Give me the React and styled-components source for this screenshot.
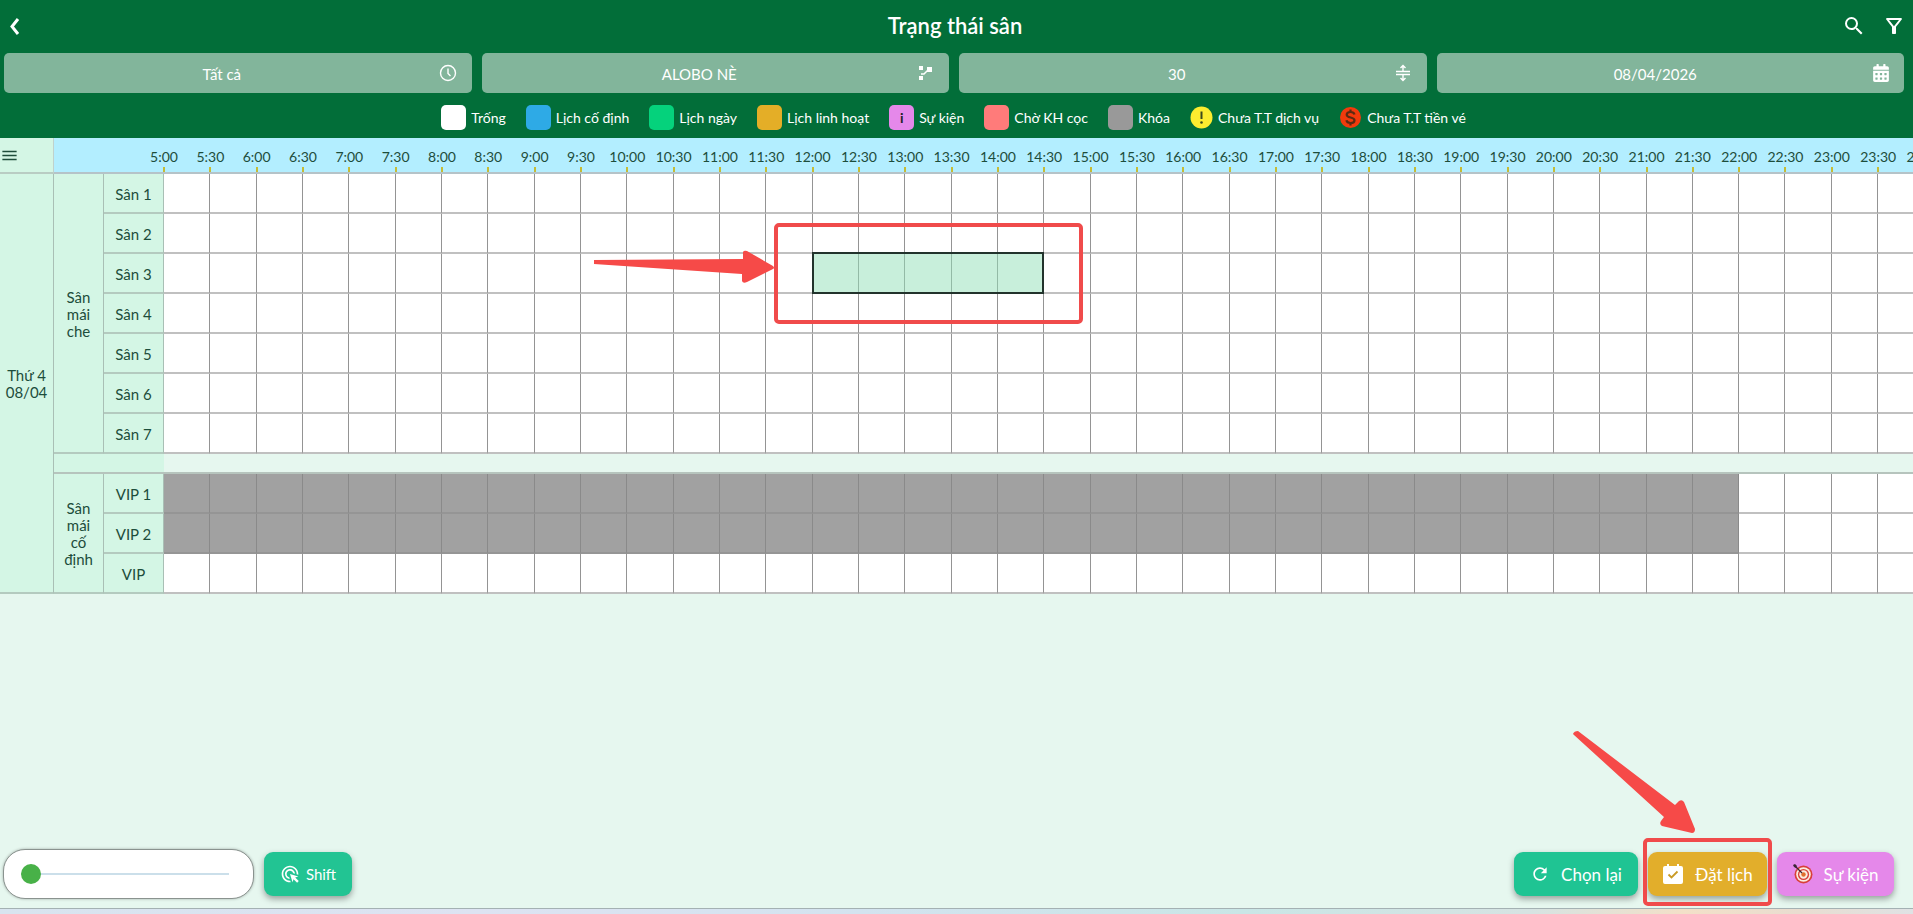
import React, { useState } from 'react';
import styled, { createGlobalStyle, css } from 'styled-components';
import { MdSearch, MdOutlineFilterAlt, MdRefresh, MdAdsClick, MdMenu } from 'react-icons/md';
import { FaCalendarAlt } from 'react-icons/fa';

const GlobalStyle = createGlobalStyle`
  *, *::before, *::after {
    box-sizing: border-box;
  }
  body {
    margin: 0;
    background: #e6f7ef;
    font-family: Lato, 'Noto Sans', sans-serif;
    font-size: 15px;
    color: #1d4d3b;
  }
`;

const Page = styled.div`
  position: relative;
  display: flex;
  flex-direction: column;
  min-height: 100vh;
  overflow: hidden;
`;

const Header = styled.header`
  height: 138px;
  background: #026e39;
  color: #fff;
`;

const TitleBar = styled.div`
  display: flex;
  align-items: center;
  justify-content: space-between;
  height: 53px;
  padding: 0 7px 2px 4px;
`;

const TitleSide = styled.div`
  display: flex;
  flex: 1;
  gap: 16px;
  justify-content: ${props => props.$end ? 'flex-end' : 'flex-start'};
`;

const Title = styled.h1`
  margin: 0;
  font-size: 22px;
  font-weight: 600;
  line-height: 24px;
`;

const IconButton = styled.button`
  display: flex;
  padding: 0;
  border: 0;
  background: transparent;
  color: inherit;
  cursor: pointer;
`;

const Filters = styled.div`
  display: grid;
  grid-template-columns: repeat(4, 1fr);
  gap: 10px;
  padding: 0 9px 0 4px;
`;

const FilterButton = styled.button`
  display: flex;
  align-items: center;
  gap: 8px;
  height: 40px;
  padding: 0 14px 0 10px;
  border: 0;
  border-radius: 5px;
  background: #82b59b;
  color: #fff;
  font-family: inherit;
  font-size: 15px;
  cursor: pointer;
`;

const FilterText = styled.span`
  flex: 1;
  padding-top: 2px;
  text-align: center;
`;

const Legend = styled.ul`
  display: flex;
  align-items: center;
  justify-content: center;
  gap: 20px;
  height: 25px;
  margin: 12px 0 0;
  padding: 0 6px 0 0;
  list-style: none;
  font-size: 14px;
`;

const LegendItem = styled.li`
  display: flex;
  align-items: center;
  gap: 5px;
`;

const Swatch = styled.span`
  display: flex;
  align-items: center;
  justify-content: center;
  width: 25px;
  height: 25px;
  border-radius: 5px;
  background: ${props => props.$color};
  color: #222;
  font-weight: 700;
`;

const Scroller = styled.main`
  overflow: hidden;
`;

// half-hour columns run past the right edge and are clipped by the scroller
const Table = styled.table`
  width: calc(100% + 58px);
  table-layout: fixed;
  border-collapse: separate;
  border-spacing: 0;
`;

const DayCol = styled.col`
  width: 54px;
`;

const GroupCol = styled.col`
  width: 50px;
`;

const CourtCol = styled.col`
  width: 60px;
`;

const MenuCell = styled.th`
  height: 36px;
  padding: 0;
  border-right: 1px solid #c0d2cc;
  border-bottom: 2px solid #b9ccc3;
  background: #d4f6e5;
`;

const TimeCell = styled.th`
  height: 36px;
  padding: 0;
  border-bottom: 2px solid #b5c3c8;
  background: #b3eeff;
  font-weight: 400;
`;

// centres the label on the left line of its column
const TimeLabel = styled.div`
  display: flex;
  flex-direction: column;
  align-items: center;
  justify-content: flex-end;
  gap: 2px;
  width: 100%;
  height: 34px;
  margin-left: -50%;
  font-size: 14px;
  line-height: 17px;

  &::after {
    content: '';
    width: 2px;
    height: 5px;
    background: #c6bb36;
  }
`;

const SideCell = styled.th`
  height: 40px;
  padding: 2px 0 0;
  border-right: 1px solid #a9bfb5;
  border-bottom: 2px solid #b4cabf;
  background: #d4f6e5;
  font-size: 15px;
  font-weight: 400;
  line-height: 17px;
  text-align: center;
`;

const Slot = styled.td`
  position: relative;
  height: 40px;
  padding: 0;
  border-right: 1px solid ${props => props.$locked ? '#8a8a8a' : '#949494'};
  border-bottom: 2px solid ${props => props.$locked ? '#959595' : '#c0c0c0'};
  background: ${props => props.$locked ? '#a1a1a1' : '#fff'};
`;

const SpacerCell = styled.td`
  height: 20px;
  padding: 0;
  border-bottom: 2px solid #b6c4bd;
  ${props => props.$side && css`
    background: #d4f6e5;
  `}
`;

const Selection = styled.div`
  position: absolute;
  z-index: 1;
  top: -2px;
  left: -1px;
  width: calc(500% + 6px);
  height: 42px;
  border: 2px solid #22332c;
  background: rgba(145, 223, 184, 0.5);
`;

const Toolbar = styled.footer`
  display: flex;
  align-items: center;
  gap: 10px;
  margin-top: auto;
  padding: 0 19px 9px 3px;
`;

const SliderBox = styled.label`
  display: flex;
  align-items: center;
  width: 251px;
  height: 50px;
  padding: 0 24px 0 17px;
  border: 1px solid #8a938f;
  border-radius: 22px;
  background: #fff;
  box-shadow: 0 0 3px rgba(0, 0, 0, 0.3);
`;

const Slider = styled.input`
  flex: 1;
  width: 100%;
  height: 20px;
  margin: 0;
  appearance: none;
  background: linear-gradient(#cbdfea, #cbdfea) center / 100% 2px no-repeat;

  &::-webkit-slider-thumb {
    appearance: none;
    width: 20px;
    height: 20px;
    border-radius: 50%;
    background: #48b148;
  }
`;

const ActionButton = styled.button`
  display: flex;
  align-items: center;
  justify-content: center;
  gap: ${props => props.$compact ? '6px' : '11px'};
  width: ${props => props.$width};
  height: 44px;
  padding: 0;
  border: 0;
  border-radius: 9px;
  background: ${props => props.$color};
  box-shadow: 0 3px 6px rgba(0, 0, 0, 0.35);
  color: #fff;
  font-family: inherit;
  font-size: ${props => props.$compact ? '15px' : '17px'};
  cursor: pointer;
`;

const Spacer = styled.div`
  flex: 1;
`;

const BottomStrip = styled.div`
  height: 6px;
  border-top: 1px solid #a4b1b3;
  background: linear-gradient(90deg, #d8e4ef, #dde3f2 25%, #d3e3ef 45%, #c9e6e6 65%, #d6e3e2 80%, #f3e0c8 88%, #e9ddd0 94%, #dfe2e4);
`;

const Frame = styled.div`
  position: absolute;
  z-index: 2;
  border: 4px solid #f04b4b;
  border-radius: 5px;
  pointer-events: none;
`;

const SlotFrame = styled(Frame)`
  top: -31px;
  left: -39px;
  width: 309px;
  height: 101px;
`;

const SlotArrow = styled.svg`
  position: absolute;
  z-index: 2;
  top: -4px;
  left: -220px;
  pointer-events: none;
`;

const Highlighted = styled.div`
  position: relative;
`;

const ButtonFrame = styled(Frame)`
  top: -14px;
  left: -5px;
  width: 129px;
  height: 68px;
`;

const ButtonArrow = styled.svg`
  position: absolute;
  z-index: 2;
  top: -122px;
  left: -76px;
  pointer-events: none;
`;

const BackIcon = () => (
    <svg width="20" height="24" viewBox="0 0 20 24" fill="none" stroke="currentColor" strokeWidth="3">
        <path d="M14 5 L8 12.500 L14 20" />
    </svg>
);

const ClockIcon = () => (
    <svg width="20" height="20" viewBox="0 0 20 20" fill="none" stroke="currentColor" strokeWidth="1.4">
        <circle cx="10" cy="10" r="7.5" />
        <path d="M10 5.500 V10.500 L12.500 13" />
    </svg>
);

const BranchIcon = () => (
    <svg width="20" height="20" viewBox="0 0 20 20" fill="currentColor">
        <rect x="4" y="3" width="4" height="4" />
        <rect x="4" y="13" width="4" height="4" />
        <rect x="12" y="4" width="5" height="5" />
        <path d="M6 11 H9 L13 7" fill="none" stroke="currentColor" strokeWidth="1.5" />
    </svg>
);

const IntervalIcon = () => (
    <svg width="20" height="20" viewBox="0 0 20 20" fill="none" stroke="currentColor" strokeWidth="1.4">
        <path d="M3 8.500 H17 M3 11.500 H17 M10 3 V8 M10 12 V17 M7.500 5 L10 2.500 L12.500 5 M7.500 15 L10 17.500 L12.500 15" />
    </svg>
);

const WarningIcon = () => (
    <svg width="23" height="23" viewBox="1 1 23 23">
        <circle cx="12.500" cy="12.500" r="11" fill="#fdec2f" />
        <path d="M12.500 6.500 V14" stroke="#3d4a1c" strokeWidth="2" />
        <circle cx="12.500" cy="17.500" r="1.300" fill="#3d4a1c" />
    </svg>
);

const MoneyIcon = () => (
    <svg width="23" height="23" viewBox="1 1 23 23" fill="none">
        <circle cx="12.500" cy="12.500" r="10.500" fill="#f23a0c" />
        <path
            d="M16.500 9.500 C16 7.500 14.500 7 12.500 7 C10 7 8.700 8.200 8.700 9.800 C8.700 13.500 16.500 11.500 16.500 15.200 C16.500 17 15 18 12.500 18 C10.300 18 8.800 17.200 8.400 15.300 M12.500 4.500 V7 M12.500 18 V20.500"
            stroke="#5c2a12"
            strokeWidth="2.200"
        />
    </svg>
);

const CalendarCheckIcon = () => (
    <svg width="22" height="22" viewBox="0 0 22 22">
        <path d="M3 3 H5 V1 H7 V3 H15 V1 H17 V3 H19 Q21 3 21 5 V19 Q21 21 19 21 H3 Q1 21 1 19 V5 Q1 3 3 3 Z" fill="#fff" />
        <path d="M6.500 11.500 L9.500 14.500 L15.500 8.500" fill="none" stroke="#c99a26" strokeWidth="1.800" />
    </svg>
);

const TargetIcon = () => (
    <svg width="20" height="20" viewBox="0 0 20 20">
        <circle cx="10.500" cy="10.500" r="9" fill="#d8403a" />
        <circle cx="10.500" cy="10.500" r="7.300" fill="#fbeee0" />
        <circle cx="10.500" cy="10.500" r="5.600" fill="#d8403a" />
        <circle cx="10.500" cy="10.500" r="4.200" fill="#fbeee0" />
        <circle cx="10.500" cy="10.500" r="2.200" fill="#e0702e" />
        <path d="M2 2 L9 9" stroke="#3b2533" strokeWidth="1.200" />
        <path d="M0 1 L2 0 L4 2 L3 4 L1 3 Z" fill="#3b2533" />
    </svg>
);

const filters = [
    { text: 'Tất cả', icon: <ClockIcon /> },
    { text: 'ALOBO NÈ', icon: <BranchIcon /> },
    { text: '30', icon: <IntervalIcon /> },
    { text: '08/04/2026', icon: <FaCalendarAlt size={18} /> },
];

const legend = [
    { text: 'Trống', color: '#fff' },
    { text: 'Lịch cố định', color: '#2eaae6' },
    { text: 'Lịch ngày', color: '#05d27c' },
    { text: 'Lịch linh hoạt', color: '#e4ae27' },
    { text: 'Sự kiện', color: '#e588ea', mark: 'i' },
    { text: 'Chờ KH cọc', color: '#ff7b7a' },
    { text: 'Khóa', color: '#999' },
    { text: 'Chưa T.T dịch vụ', icon: <WarningIcon /> },
    { text: 'Chưa T.T tiền vé', icon: <MoneyIcon /> },
];

const groups = [
    { name: ['Sân', 'mái', 'che'], courts: ['Sân 1', 'Sân 2', 'Sân 3', 'Sân 4', 'Sân 5', 'Sân 6', 'Sân 7'] },
    { name: ['Sân', 'mái', 'cố', 'định'], courts: ['VIP 1', 'VIP 2', 'VIP'] },
];

// 5:00 to 24:00 in half hours
const times = Array.from({ length: 39 }, (_, i) => `${5 + Math.floor(i / 2)}:${i % 2 ? '30' : '00'}`);

const lockedCourts = ['VIP 1', 'VIP 2'];
const lockedUntil = times.indexOf('22:00');

const Lines = ({ items }) => items.map(item => <div key={item}>{item}</div>);

const CourtSlots = ({ court }) => times.map((time, i) => (
    <Slot key={time} $locked={lockedCourts.includes(court) && i < lockedUntil}>
        {court === 'Sân 3' && time === '12:00' && (
            <>
                <Selection />
                <SlotFrame />
                <SlotArrow width="182" height="36" viewBox="0 0 182 36">
                    <path
                        d="M1 10 L150 9 V2 Q151 0 154 1 L180 16 Q182 18 180 19 L154 32 Q150 34 149 31 V24 L1 14 Z"
                        fill="#f64a48"
                    />
                </SlotArrow>
            </>
        )}
    </Slot>
));

const Schedule = () => (
    <Scroller>
        <Table>
            <colgroup>
                <DayCol />
                <GroupCol />
                <CourtCol />
                {times.map(time => <col key={time} />)}
            </colgroup>
            <thead>
                <tr>
                    <MenuCell>
                        <IconButton aria-label="Menu"><MdMenu size={19} /></IconButton>
                    </MenuCell>
                    <TimeCell colSpan={2} />
                    {times.map(time => (
                        <TimeCell key={time}><TimeLabel>{time}</TimeLabel></TimeCell>
                    ))}
                </tr>
            </thead>
            <tbody>
                {groups.map((group, g) => (
                    <React.Fragment key={g}>
                        {g > 0 && (
                            <tr>
                                <SpacerCell colSpan={2} $side />
                                <SpacerCell colSpan={times.length} />
                            </tr>
                        )}
                        {group.courts.map((court, i) => (
                            <tr key={court}>
                                {g === 0 && i === 0 && (
                                    <SideCell rowSpan={11}><Lines items={['Thứ 4', '08/04']} /></SideCell>
                                )}
                                {i === 0 && (
                                    <SideCell rowSpan={group.courts.length}><Lines items={group.name} /></SideCell>
                                )}
                                <SideCell>{court}</SideCell>
                                <CourtSlots court={court} />
                            </tr>
                        ))}
                    </React.Fragment>
                ))}
            </tbody>
        </Table>
    </Scroller>
);

const App = () => {
    const [zoom, setZoom] = useState(0);

    return (
        <Page>
            <GlobalStyle />
            <Header>
                <TitleBar>
                    <TitleSide>
                        <IconButton aria-label="Quay lại"><BackIcon /></IconButton>
                    </TitleSide>
                    <Title>Trạng thái sân</Title>
                    <TitleSide $end>
                        <IconButton aria-label="Tìm kiếm"><MdSearch size={24} stroke="currentColor" /></IconButton>
                        <IconButton aria-label="Lọc"><MdOutlineFilterAlt size={24} stroke="currentColor" /></IconButton>
                    </TitleSide>
                </TitleBar>
                <Filters>
                    {filters.map(filter => (
                        <FilterButton key={filter.text}>
                            <FilterText>{filter.text}</FilterText>
                            {filter.icon}
                        </FilterButton>
                    ))}
                </Filters>
                <Legend>
                    {legend.map(item => (
                        <LegendItem key={item.text}>
                            {item.icon || <Swatch $color={item.color}>{item.mark}</Swatch>}
                            {item.text}
                        </LegendItem>
                    ))}
                </Legend>
            </Header>
            <Schedule />
            <Toolbar>
                <SliderBox>
                    <Slider
                        type="range"
                        aria-label="Thu phóng"
                        value={zoom}
                        onChange={e => setZoom(Number(e.target.value))}
                    />
                </SliderBox>
                <ActionButton $color="#22c493" $width="88px" $compact>
                    <MdAdsClick size={20} stroke="currentColor" />
                    Shift
                </ActionButton>
                <Spacer />
                <ActionButton $color="#1fc493" $width="124px">
                    <MdRefresh size={20} stroke="currentColor" />
                    Chọn lại
                </ActionButton>
                <Highlighted>
                    <ActionButton $color="#e2ae2b" $width="119px">
                        <CalendarCheckIcon />
                        Đặt lịch
                    </ActionButton>
                    <ButtonFrame />
                    <ButtonArrow width="124" height="106" viewBox="0 0 124 106">
                        <path
                            d="M1 4 Q2 1 6 1 L103 75 L107 71 Q110 69 112 72 L123 99 Q123 103 120 103 L90 96 Q87 94 89 91 L92 87 L2 5 Z"
                            fill="#f64a48"
                        />
                    </ButtonArrow>
                </Highlighted>
                <ActionButton $color="#e588ea" $width="117px">
                    <TargetIcon />
                    Sự kiện
                </ActionButton>
            </Toolbar>
            <BottomStrip />
        </Page>
    );
};

export default App;
